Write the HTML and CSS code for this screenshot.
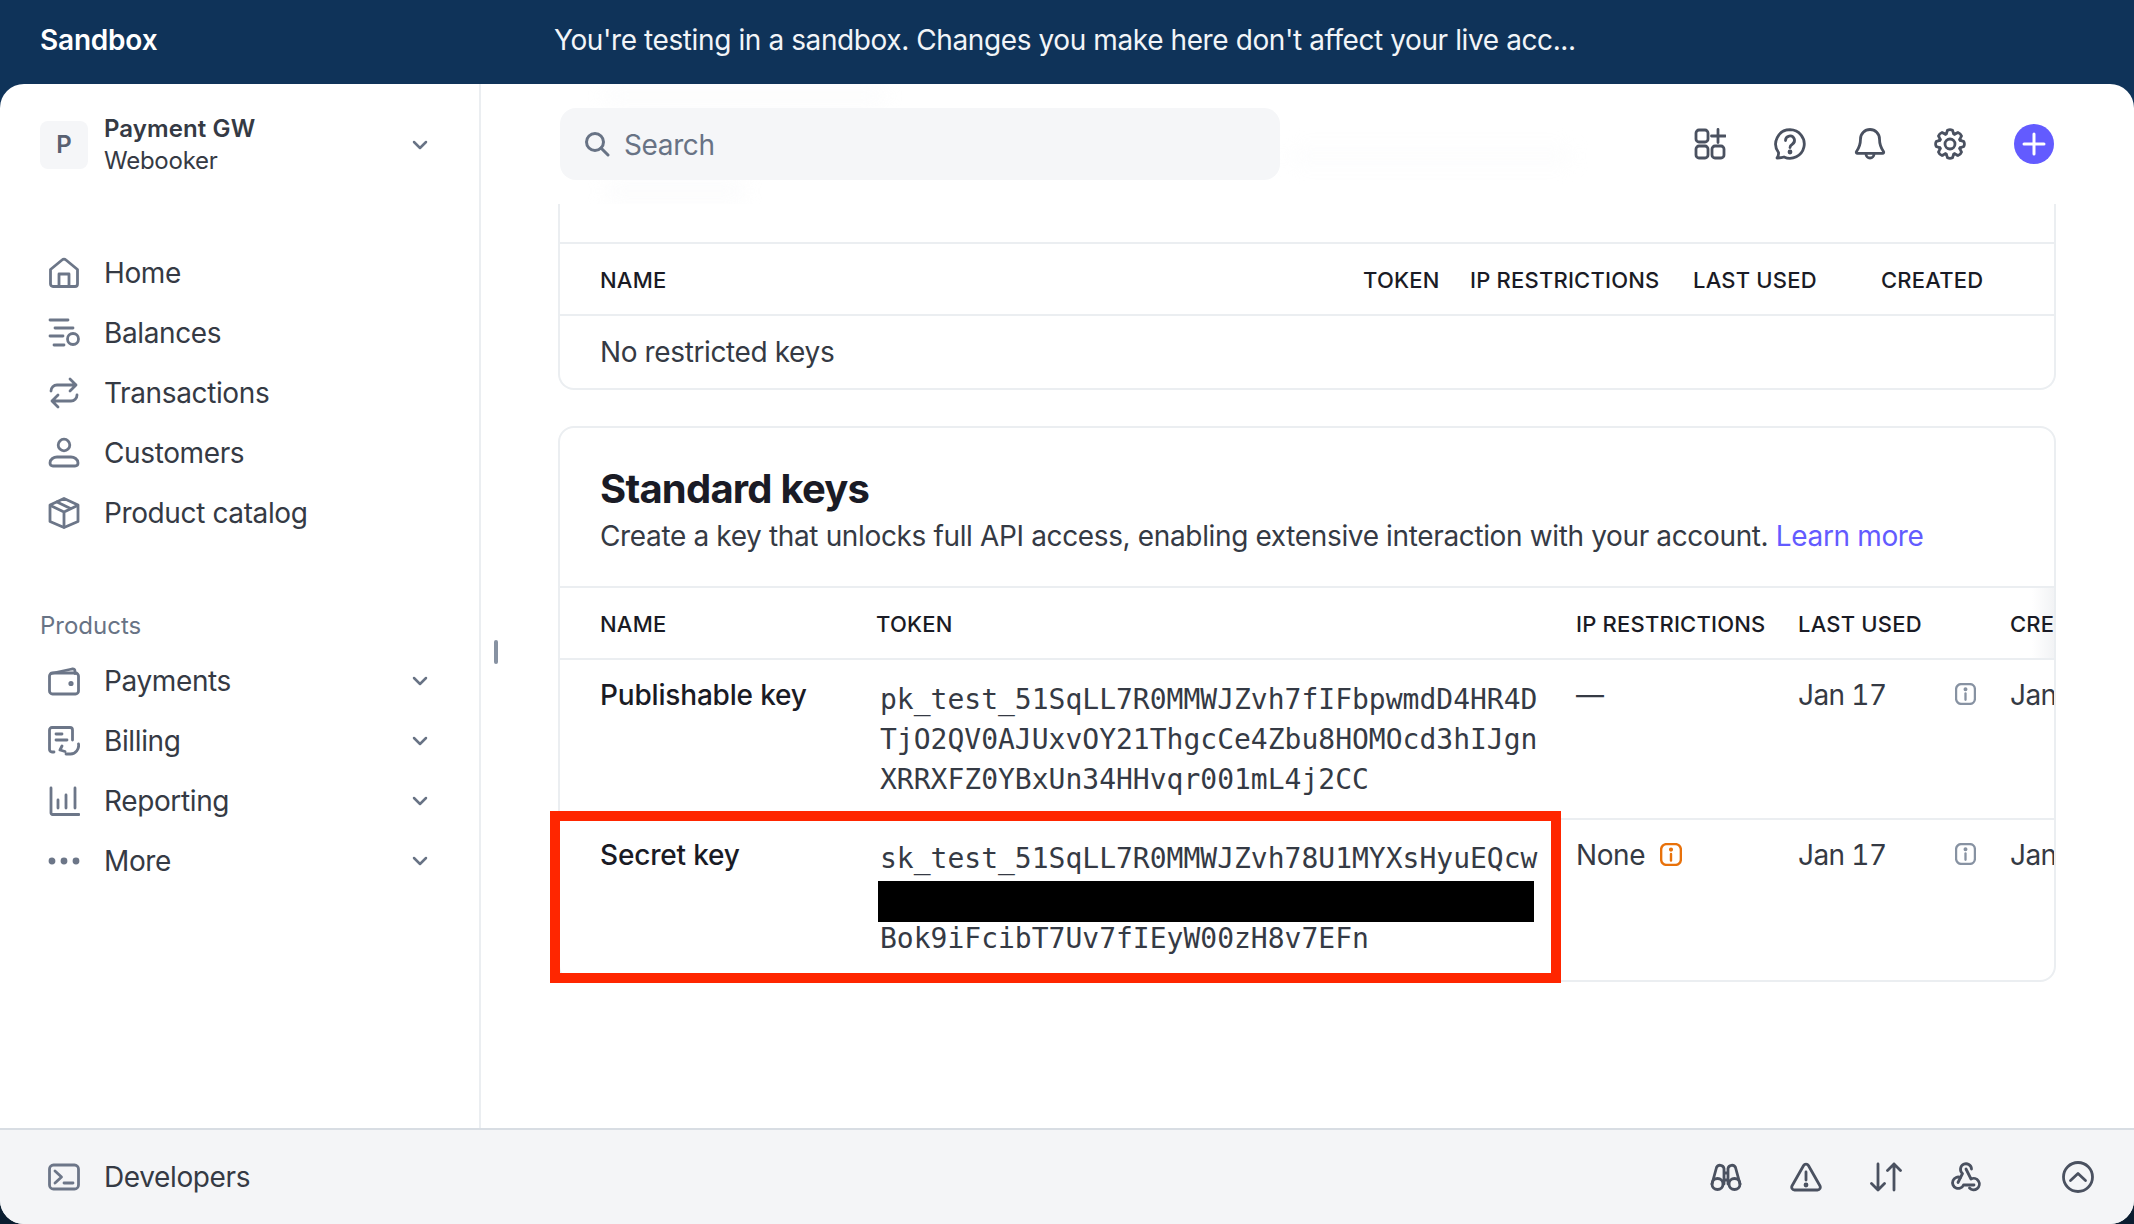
FILE: index.html
```html
<!DOCTYPE html>
<html lang="en">
<head>
<meta charset="utf-8">
<title>API keys</title>
<link rel="stylesheet" href="styles.css">
</head>
<body>
<div class="banner"><span class="banner-name">Sandbox</span><span class="banner-msg">You're testing in a sandbox. Changes you make here don't affect your live acc...</span></div>
<div class="window">
  <div class="upper">
    <aside class="sidebar">
      <div class="account">
        <div class="tile">P</div>
        <div class="account-text"><div class="account-name">Payment GW</div><div class="account-org">Webooker</div></div>
        <svg class="chev" viewBox="0 0 16 16"><path d="M2 5l6 6 6-6"/></svg>
      </div>
      <nav class="nav">
        <a class="nav-item"><svg class="ico" viewBox="0 0 32 32"><path d="M2.500 12.500L14 3a3 3 0 0 1 4 0l11.500 9.500V27a2.500 2.500 0 0 1-2.500 2.500H5A2.500 2.500 0 0 1 2.500 27z"/><path d="M11 29V17h10v12"/></svg><span>Home</span></a>
        <a class="nav-item"><svg class="ico" viewBox="0 0 32 32"><path d="M2 3h18M7 11h18M2 19h13M6 28h10"/><circle cx="25" cy="22" r="5.500"/></svg><span>Balances</span></a>
        <a class="nav-item"><svg class="ico" viewBox="0 0 32 32"><path d="M3 14a6 6 0 0 1 6-6h19M22 2l6 6-6 6"/><path d="M29 18a6 6 0 0 1-6 6H4M10 18l-6 6 6 6"/></svg><span>Transactions</span></a>
        <a class="nav-item"><svg class="ico" viewBox="0 0 32 32"><circle cx="16" cy="8" r="5.800"/><path d="M2 26c0-4 4-6 7-6h14c3 0 7 2 7 6 0 2-1 3-3 3H5c-2 0-3-1-3-3z"/></svg><span>Customers</span></a>
        <a class="nav-item"><svg class="ico" viewBox="0 0 32 32"><path d="M16 1.500L30 8v16.500L16 30.500 2 24.500V8z"/><path d="M2.500 8.500L16 15l13.500-6.500M16 15v15M9 5l13.500 6.500"/></svg><span>Product catalog</span></a>
      </nav>
      <div class="nav-label">Products</div>
      <nav class="nav">
        <a class="nav-item"><svg class="ico" viewBox="0 0 32 32"><rect x="1.500" y="8" width="29" height="21" rx="3"/><path d="M3 8.500L24 4q3-.5 3 2.500v2"/><circle cx="23" cy="18.500" r="1.200"/></svg><span>Payments</span><svg class="chev" viewBox="0 0 16 16"><path d="M2 5l6 6 6-6"/></svg></a>
        <a class="nav-item"><svg class="ico" viewBox="0 0 32 32"><path d="M6 27H4a2.500 2.500 0 0 1-2.500-2.500V5A2.500 2.500 0 0 1 4 2.500h18A2.500 2.500 0 0 1 24.500 5v10"/><path d="M8 9h6M8 15h11"/><path d="M30.500 19a8.500 8.500 0 0 1-8 10H18M14 21l-2 4 5 1.500"/></svg><span>Billing</span><svg class="chev" viewBox="0 0 16 16"><path d="M2 5l6 6 6-6"/></svg></a>
        <a class="nav-item"><svg class="ico" viewBox="0 0 32 32"><path d="M3 3v25a1.500 1.500 0 0 0 1.500 1.500H31"/><path d="M10 15v8M18 10v13M27 3v20"/></svg><span>Reporting</span><svg class="chev" viewBox="0 0 16 16"><path d="M2 5l6 6 6-6"/></svg></a>
        <a class="nav-item"><svg class="ico" viewBox="0 0 32 32"><circle class="solid" cx="4" cy="16" r="2"/><circle class="solid" cx="16" cy="16" r="2"/><circle class="solid" cx="28" cy="16" r="2"/></svg><span>More</span><svg class="chev" viewBox="0 0 16 16"><path d="M2 5l6 6 6-6"/></svg></a>
      </nav>
    </aside>
    <main class="main">
      <div class="ghost ghost-a"></div><div class="ghost ghost-b"></div><div class="ghost ghost-c"></div>
      <div class="scroll-handle"></div>
      <header class="topbar">
        <label class="search">
          <svg class="search-ico" viewBox="0 0 26 26"><circle cx="11" cy="11" r="8.500"/><path d="M17 17l7 7"/></svg>
          <span>Search</span>
        </label>
        <div class="tools">
          <svg class="tool" viewBox="0 0 32 32"><rect x="2" y="2" width="12" height="12" rx="3"/><rect x="2" y="18" width="12" height="12" rx="3"/><rect x="18" y="18" width="12" height="12" rx="3"/><path d="M24 1.500v13M17.500 8h14"/></svg>
          <svg class="tool" viewBox="0 0 32 32"><path d="M16 1.700a14.300 14.300 0 1 1-6 27.300c-2.200.8-4.500 1-7 1 1.200-1.800 1.800-3.300 1.500-5.500A14.300 14.300 0 0 1 16 1.700z"/><path d="M11.500 12.500a4.500 4.500 0 1 1 6.800 3.800c-1.300.8-2.300 1.500-2.300 3.200"/><circle class="solid" cx="16" cy="24" r="1"/></svg>
          <svg class="tool" viewBox="0 0 32 32"><path d="M16 1.500a9.500 9.500 0 0 0-9.500 9.500c0 6-1.500 9-4 12.500-.6.900-.1 1.800 1 1.800h25c1.100 0 1.600-.9 1-1.800-2.500-3.500-4-6.500-4-12.500A9.500 9.500 0 0 0 16 1.500z"/><path d="M12 26a4 4 0 0 0 8 0"/></svg>
          <svg class="tool" viewBox="0 0 32 32"><circle cx="16" cy="16" r="5"/><path id="lobe" d="M11.500 6.300C13 5.500 13 3.500 13.500 2.200Q16 1 18.500 2.200C19 3.500 19 5.500 20.500 6.300"/><use href="#lobe" transform="rotate(45 16 16)"/><use href="#lobe" transform="rotate(90 16 16)"/><use href="#lobe" transform="rotate(135 16 16)"/><use href="#lobe" transform="rotate(180 16 16)"/><use href="#lobe" transform="rotate(225 16 16)"/><use href="#lobe" transform="rotate(270 16 16)"/><use href="#lobe" transform="rotate(315 16 16)"/></svg>
          <div class="add"><svg viewBox="0 0 24 24"><path d="M12 2v20M2 12h20"/></svg></div>
        </div>
      </header>

      <section class="card card-restricted">
        <div class="row row-head cols-a"><span>Name</span><span>Token</span><span>IP restrictions</span><span>Last used</span><span>Created</span></div>
        <div class="empty">No restricted keys</div>
      </section>

      <div class="card-wrap">
        <section class="card">
          <div class="card-title">
            <h2>Standard keys</h2>
            <p>Create a key that unlocks full API access, enabling extensive interaction with your account. <a class="link">Learn more</a></p>
          </div>
          <div class="row row-head cols-b"><span>Name</span><span>Token</span><span>IP restrictions</span><span>Last used</span><span></span><span>Created</span></div>
          <div class="row row-key row-pub cols-b">
            <span class="key-name">Publishable key</span>
            <div class="token"><div>pk_test_51SqLL7R0MMWJZvh7fIFbpwmdD4HR4D</div><div>TjO2QV0AJUxvOY21ThgcCe4Zbu8HOMOcd3hIJgn</div><div>XRRXFZ0YBxUn34HHvqr001mL4j2CC</div></div>
            <span>—</span>
            <span class="date">Jan 17</span>
            <svg class="info" viewBox="0 0 20 21"><rect x="1" y="1" width="18" height="19" rx="5"/><path d="M10 10v6"/><circle class="solid" cx="10" cy="6" r=".8"/></svg>
            <span class="date">Jan 17</span>
          </div>
          <div class="row row-key row-sec cols-b">
            <span class="key-name">Secret key</span>
            <div class="token"><div>sk_test_51SqLL7R0MMWJZvh78U1MYXsHyuEQcw</div><div class="redact"></div><div>Bok9iFcibT7Uv7fIEyW00zH8v7EFn</div></div>
            <span class="none">None <svg class="info warn" viewBox="0 0 20 21"><rect x="1" y="1" width="18" height="19" rx="5"/><path d="M10 10v6"/><circle class="solid" cx="10" cy="6" r=".8"/></svg></span>
            <span class="date">Jan 17</span>
            <svg class="info" viewBox="0 0 20 21"><rect x="1" y="1" width="18" height="19" rx="5"/><path d="M10 10v6"/><circle class="solid" cx="10" cy="6" r=".8"/></svg>
            <span class="date">Jan 17</span>
          </div>
        </section>
        <div class="annotation"></div>
      </div>
    </main>
  </div>
  <footer class="dev">
    <svg class="ico" viewBox="0 0 32 32"><rect x="1.500" y="4" width="29" height="24" rx="4"/><path d="M7 10l6.500 6L7 22M16 22h9"/></svg>
    <span class="dev-label">Developers</span>
    <div class="dev-tools">
      <svg class="tool" viewBox="0 0 32 32"><circle cx="7.500" cy="23" r="5.500"/><circle cx="24.500" cy="23" r="5.500"/><path d="M2 23L6.500 6.500a4 4 0 0 1 7.500 1V23M30 23L25.500 6.500a4 4 0 0 0-7.500 1V23M14 12h4M14 19h4"/></svg>
      <svg class="tool" viewBox="0 0 32 32"><path d="M13.600 4.500a2.800 2.800 0 0 1 4.800 0l11.500 20.300a2.800 2.800 0 0 1-2.400 4.200H4.500a2.800 2.800 0 0 1-2.400-4.200z"/><path d="M16 11v8"/><circle class="solid" cx="16" cy="24" r="1"/></svg>
      <svg class="tool" viewBox="0 0 32 32"><path d="M8 3v26M1.500 22.500L8 29l6.500-6.500M24 29V3M17.500 9.500L24 3l6.500 6.500"/></svg>
      <svg class="tool" viewBox="0 0 32 32"><path d="M21.500 8a5.500 5.500 0 1 0-9 4.500L8 21.500"/><path d="M16 8l5 10a5.700 5.700 0 1 1-1.500 9"/><path d="M10.500 16.500a5.700 5.700 0 1 0 3 7.500H24"/></svg>
      <svg class="tool tool-last" viewBox="0 0 32 32"><circle cx="16" cy="16" r="14.500"/><path d="M8.500 19.500L16 12.500l7.500 7"/></svg>
    </div>
  </footer>
</div>
</body>
</html>
```

FILE: styles.css
```css
* { box-sizing: border-box; }
html, body { margin: 0; height: 100%; }
body {
  width: 2134px;
  height: 1224px;
  overflow: hidden;
  font-family: Inter, "Noto Sans", sans-serif;
  font-size: 28px;
  letter-spacing: -.38px;
  color: #353a44;
  background: linear-gradient(#0f3359 0 70%, #0a1d30 70% 100%);
  display: flex;
  flex-direction: column;
}
svg { display: block; flex: none; fill: none; stroke-linecap: round; stroke-linejoin: round; }
.solid { fill: currentColor; }

.banner { height: 84px; flex: none; display: flex; align-items: center; color: #fff; padding-left: 40px; padding-bottom: 4px; }
.banner-name { width: 514px; font-weight: 600; letter-spacing: -.2px; }
.banner-msg { color: #f2f5f8; letter-spacing: -.4px; }

.window { flex: 1; min-height: 0; display: flex; flex-direction: column; background: #fff; border-radius: 24px; overflow: hidden; }
.upper { flex: 1; min-height: 0; display: flex; }

.sidebar { width: 481px; flex: none; border-right: 2px solid #ebeef1; padding: 36px 0 0 0; }
.account { display: flex; align-items: center; height: 49px; padding-left: 40px; }
.tile { width: 48px; height: 48px; border-radius: 8px; background: #f5f6f8; color: #596171; font-weight: 600; font-size: 24px; letter-spacing: 0; display: flex; align-items: center; justify-content: center; flex: none; }
.account-text { margin-left: 16px; font-size: 24px; line-height: 32px; color: #353a44; }
.account-name { font-weight: 600; letter-spacing: .1px; }
.account-org { letter-spacing: -.25px; }
.chev { width: 16px; height: 16px; margin-left: auto; margin-right: 51px; stroke: #687385; stroke-width: 2.5; }
.nav { display: flex; flex-direction: column; }
.account + .nav { margin-top: 74px; }
.nav-item { display: flex; align-items: center; height: 60px; padding-left: 48px; gap: 24px; }
.ico { width: 32px; height: 32px; stroke: #6c7688; stroke-width: 2.8; color: #6c7688; }
.nav-label { margin-top: 67px; margin-bottom: 9px; padding-left: 40px; font-size: 24px; line-height: 32px; letter-spacing: 0; color: #687385; }

.main { flex: 1; min-width: 0; position: relative; padding: 0 78px 0 77px; overflow: hidden; }
.ghost { position: absolute; background: #f4f5f7; filter: blur(10px); opacity: .45; }
.ghost-a { left: 124px; top: 6px; width: 280px; height: 12px; }
.ghost-b { left: 810px; top: 64px; width: 280px; height: 16px; opacity: .3; }
.ghost-c { left: 124px; top: 100px; width: 140px; height: 14px; }
.scroll-handle { position: absolute; left: 13px; top: 556px; width: 4px; height: 24px; border-radius: 2px; background: #8792a2; }

.topbar { position: relative; height: 120px; display: flex; align-items: center; padding: 0 2px 0 2px; }
.search { width: 720px; height: 72px; border-radius: 16px; background: #f5f6f8; display: flex; align-items: center; padding-left: 24px; gap: 14px; color: #687385; }
.search span { position: relative; top: 1px; }
.search-ico { width: 26px; height: 26px; stroke: #687385; stroke-width: 3; }
.tools { margin-left: auto; display: flex; align-items: center; gap: 48px; }
.tool { width: 32px; height: 32px; stroke: #4a5160; stroke-width: 2.8; color: #4a5160; }
.add { width: 40px; height: 40px; border-radius: 50%; background: #635bff; display: flex; align-items: center; justify-content: center; }
.add svg { width: 24px; height: 24px; stroke: #fff; stroke-width: 3; }

.card { position: relative; border: 2px solid #ebeef1; border-radius: 16px; overflow: hidden; background: #fff; }
.card-restricted { border-top: none; border-radius: 0 0 16px 16px; padding-top: 38px; }
.card-wrap { position: relative; margin-top: 36px; }
.row { display: grid; padding-left: 40px; }
.cols-a { grid-template-columns: 763px 107px 223px 188px 200px; }
.cols-b { grid-template-columns: 276px 700px 222px 157px 55px 200px; }
.row-head { height: 74px; align-items: center; padding-top: 1px; border-top: 2px solid #ebeef1; border-bottom: 2px solid #ebeef1; font-size: 22px; font-weight: 500; letter-spacing: .2px; text-transform: uppercase; color: #1a1b25; white-space: nowrap; background: linear-gradient(to right, transparent calc(100% - 22px), #f2f3f5 100%); }
.card-restricted .row-head { background: none; }
.empty { height: 72px; display: flex; align-items: center; padding-left: 40px; }
.card-title { padding: 37px 40px 30px; }
.card-title h2 { margin: 0; font-size: 40px; line-height: 48px; font-weight: 700; color: #1a1b25; letter-spacing: -.8px; }
.card-title p { margin: 3px 0 0; line-height: 40px; white-space: nowrap; letter-spacing: -.36px; }
.link { color: #635bff; }
.row-key { line-height: 40px; white-space: nowrap; }
.row-pub { height: 160px; padding-top: 15px; border-bottom: 2px solid #ebeef1; }
.row-sec { height: 160px; padding-top: 15px; }
.key-name { font-weight: 500; letter-spacing: -.18px; color: #1a1b25; }
.date { font-variant-numeric: tabular-nums; letter-spacing: -.6px; }
.token { font-family: "DejaVu Sans Mono", monospace; font-size: 28px; letter-spacing: 0; padding: 5px 0 0 4px; }
.row-sec .token { padding-top: 4px; }
.redact { width: 656px; height: 41px; margin: 2px 0 -3px -2px; background: #000; }
.none { display: flex; align-items: center; gap: 15px; height: 40px; }
.info { width: 21px; height: 22px; stroke: #8792a2; color: #8792a2; stroke-width: 2.2; margin-top: 8px; }
.none .warn { width: 22px; height: 23px; stroke: #e8710a; color: #e8710a; margin-top: -2px; }
.annotation { position: absolute; left: -8px; top: 385px; width: 1011px; height: 172px; border: 10px solid #ff2600; }

.dev { flex: none; height: 96px; border-top: 2px solid #d8dde3; background: #f4f5f7; display: flex; align-items: center; padding: 0 40px 0 48px; }
.dev-label { margin-left: 24px; }
.dev-tools { margin-left: auto; display: flex; align-items: center; gap: 48px; }
.tool-last { margin-left: 32px; }
```
